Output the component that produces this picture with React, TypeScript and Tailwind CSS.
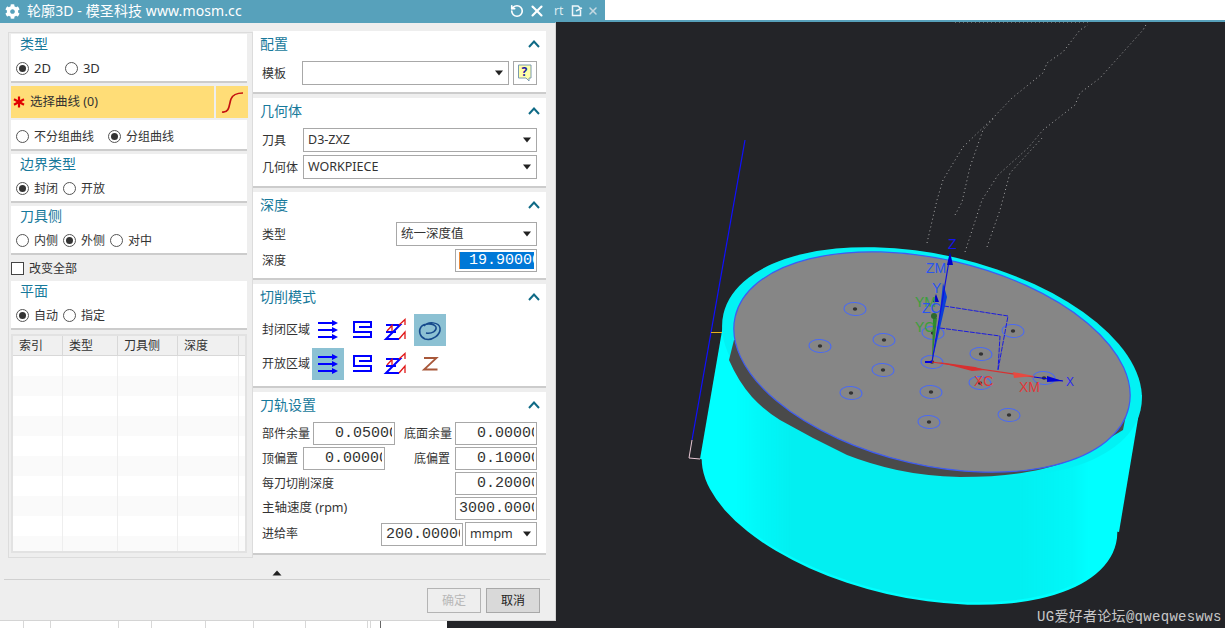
import type { ReactNode } from "react";
import { FaCog } from "react-icons/fa";
import { RotateCcw, X } from "lucide-react";

const uiFont = "font-['Noto_Sans','Noto_Sans_CJK_SC',sans-serif]";

const Radio = ({ on, label, gap = 5, big }: { on?: boolean; label: string; gap?: number; big?: boolean }) => (
  <div className="flex items-center" style={{ marginRight: gap }}>
    <span className="flex h-[13px] w-[13px] items-center justify-center rounded-full border border-[#555] bg-white">
      {on && <span className="h-[7px] w-[7px] rounded-full bg-[#333]" />}
    </span>
    <span className={big ? "ml-[5px] text-[13px] leading-none text-[#333]" : "ml-[5px] text-[12px] leading-none text-[#333]"}>
      {label}
    </span>
  </div>
);

const LeftGroup = ({ title, children }: { title: string; children: ReactNode }) => (
  <div className="h-[49px] w-[236px] border-b-2 border-[#cccccc] bg-white">
    <div className="h-[22px] pl-[9px] text-[14px] leading-[20px] text-[#17799b]">{title}</div>
    <div className="flex h-[25px] items-center pl-[5px]">{children}</div>
  </div>
);

const Caret = () => (
  <svg width="10" height="6" viewBox="0 0 10 6">
    <polygon points="1,0.5 9,0.5 5,5.5" fill="#222" />
  </svg>
);

const Select = ({ value, w, h = 24 }: { value?: string; w: number; h?: number }) => (
  <div
    className="flex shrink-0 items-center justify-between border border-[#a8a8a8] bg-white pl-[4px] pr-[4px] text-[12.5px] text-[#333]"
    style={{ width: w, height: h }}
  >
    <span className="pt-px">{value}</span>
    <Caret />
  </div>
);

const NumInput = ({ value, pad = 21, w = 82 }: { value: string; pad?: number; w?: number }) => (
  <div
    className="h-[23px] shrink-0 overflow-hidden border border-[#a8a8a8] bg-white pr-[2px] font-['Liberation_Mono',monospace] text-[15px] leading-[21px] text-[#333]"
    style={{ width: w }}
  >
    <div className="h-full overflow-hidden whitespace-nowrap" style={{ paddingLeft: pad }}>
      {value}
    </div>
  </div>
);

const Panel = ({ title, h, children }: { title: string; h: number; children: ReactNode }) => (
  <section className="border-b-2 border-[#cccccc] bg-white" style={{ height: h }}>
    <div className="flex h-[26px] items-center justify-between pl-[7px] pr-[6px]">
      <span className="text-[14px] leading-none text-[#17799b]">{title}</span>
      <svg width="12" height="8" viewBox="0 0 12 8">
        <polyline points="1,7 6,1.5 11,7" fill="none" stroke="#0f6a86" strokeWidth="2" />
      </svg>
    </div>
    <div className="pl-[9px] pr-[9px] pt-[4px] text-[12px] text-[#333]">{children}</div>
  </section>
);

const ArrowsIcon = () => (
  <svg width="32" height="32" viewBox="0 0 32 32">
    {[9, 16, 23].map((y) => (
      <g key={y}>
        <line x1="6" y1={y} x2="22" y2={y} stroke="#0000ff" strokeWidth="2" />
        <polygon points={`20,${y - 3} 26,${y} 20,${y + 3}`} fill="#0000ff" />
      </g>
    ))}
  </svg>
);

const ZigIcon = () => (
  <svg width="32" height="32" viewBox="0 0 32 32">
    <path d="M13 13 H25 V8 H8 V18 H25 V23 H7" fill="none" stroke="#0000ff" strokeWidth="2" />
  </svg>
);

const ZagIcon = () => (
  <svg width="32" height="32" viewBox="0 0 32 32">
    <path d="M6 11 H20 L6 25 H19 M6 18 H16" fill="none" stroke="#0000ff" strokeWidth="2" />
    <path d="M19 11 L25 5.500 V11 M19 25 L25 18 V25 M7 17 L12 11.500 V17" fill="none" stroke="#e01818" strokeWidth="1.300" />
  </svg>
);

const SpiralIcon = () => (
  <svg width="32" height="32" viewBox="0 0 32 32">
    <path
      d="M10 12 C14 7 25 8 26 14 C27 21 18 27 11 25 C6 23 4 17 7 13 C10 9 20 9 22 13 C23 17 18 20 12 19"
      fill="none"
      stroke="#164a8c"
      strokeWidth="1.500"
    />
  </svg>
);

const ZIcon = () => (
  <svg width="32" height="32" viewBox="0 0 32 32">
    <path d="M10 10 H22.500 L10 21.500 H23.500" fill="none" stroke="#a8583a" strokeWidth="1.800" />
  </svg>
);

const ModeButton = ({ active, children }: { active?: boolean; children: ReactNode }) => (
  <div className={active ? "h-8 w-8 bg-[#8cc1d3]" : "h-8 w-8"}>{children}</div>
);

const holes = [
  [855, 309], [820, 346], [884, 340], [883, 370], [851, 393], [931, 392], [929, 422], [932, 362],
  [933, 333], [1013, 331], [981, 354], [980, 383], [1044, 378], [1009, 415],
];

const dotted = [
  "M927 243 L937 200 L943 180 L963 147 L993 118 L1012 98 L1043 73 L1047 63 L1063 52 L1080 30 L1088 25",
  "M955 215 L962 202 L970 167 L983 130 L995 117",
  "M965 252 L982 200 L998 175 L1028 148 L1043 130 L1075 105 L1080 93 L1100 78 L1143 30 L1147 23",
  "M987 247 L1000 210 L1010 173 L1043 137",
  "M955 22 L1088 22",
];

const Viewport = () => (
  <svg width="669" height="606" viewBox="556 22 669 606" className="block">
    <defs>
      <pattern id="hatch" width="3" height="2" patternUnits="userSpaceOnUse" patternTransform="rotate(18)">
        <line x1="0" y1="1" x2="3" y2="1" stroke="#0a8f9c" strokeWidth="0.700" opacity="0.4" />
      </pattern>
      <linearGradient id="fade" gradientUnits="userSpaceOnUse" x1="735" y1="0" x2="1090" y2="0">
        <stop offset="0" stopColor="#000" />
        <stop offset="0.06" stopColor="#666" />
        <stop offset="0.16" stopColor="#fff" />
        <stop offset="0.8" stopColor="#fff" />
        <stop offset="0.95" stopColor="#777" />
        <stop offset="1" stopColor="#000" />
      </linearGradient>
      <mask id="fadeMask" maskUnits="userSpaceOnUse" x="690" y="300" width="470" height="320">
        <rect x="690" y="300" width="470" height="320" fill="url(#fade)" />
      </mask>
      <clipPath id="bodyClip">
        <ellipse cx="909.500" cy="494" rx="210" ry="100" transform="rotate(13 909.500 494)" />
        <polygon points="723,325 1142,395 1119,532 700,459" />
      </clipPath>
    </defs>

    {dotted.map((d) => (
      <path key={d} d={d} fill="none" stroke="#a8a8a8" strokeWidth="1" strokeDasharray="1 3" />
    ))}

    {/* stock body */}
    <ellipse cx="909.500" cy="495.500" rx="212" ry="101" transform="rotate(13 909.500 495.500)" fill="#00ffff" />
    <polygon points="723,325 1142,395 1119,532 700,459" fill="#00ffff" />
    <g mask="url(#fadeMask)">
      <rect x="690" y="300" width="470" height="320" fill="url(#hatch)" clipPath="url(#bodyClip)" />
    </g>
    <ellipse cx="932" cy="362" rx="214" ry="107" transform="rotate(13 932 362)" fill="#00ffff" />
    <ellipse cx="932" cy="362" rx="214" ry="107" transform="rotate(13 932 362)" fill="url(#hatch)" opacity="0.8" />

    <path
      d="M734 340 L729 360 Q738 381 752 397 Q764 410 780 420 L813 438 L847 455 Q870 464 897 470 Q925 476 960 477 Q1000 477 1027 472 Q1045 469 1060 464 Q1078 458 1093 448 L1123 430 L1128 405 L932 362 Z"
      fill="#4a4a4a"
    />
    <ellipse cx="932" cy="362" rx="202" ry="103" transform="rotate(13 932 362)" fill="#868686" stroke="#3f5cf0" strokeWidth="1.200" />

    {holes.map(([x, y]) => (
      <g key={`${x}-${y}`}>
        <ellipse cx={x} cy={y} rx="11" ry="6.500" transform={`rotate(4 ${x} ${y})`} fill="none" stroke="#4a6af2" strokeWidth="1" />
        <ellipse cx={x} cy={y} rx="2.200" ry="1.700" fill="#333" />
      </g>
    ))}

    {/* side lines */}
    <line x1="745" y1="140" x2="692" y2="440" stroke="#1010ff" strokeWidth="1.200" />
    <path d="M692 440 L689 458 L700 459" fill="none" stroke="#e8c8d4" strokeWidth="1" />
    <line x1="711" y1="332.500" x2="722" y2="332.500" stroke="#e8b020" strokeWidth="1" />

    {/* wcs */}
    <path d="M944 306 L1008 316 L998 370 M940 328 L1000 336 L998 370" fill="none" stroke="#1a1ae0" strokeWidth="1" strokeDasharray="5 1" />
    <polygon points="932,362 933,318 937,318" fill="#2e8a2e" />
    <ellipse cx="934" cy="316" rx="3" ry="3" fill="#2e6a2e" />
    <polygon points="932,362 939,320 943,283 947,297 940,328" fill="#0a3fd8" />
    <line x1="932" y1="362" x2="950" y2="255" stroke="#1010e0" strokeWidth="1.200" />
    <polygon points="950,252 947,265 953,265" fill="#0000c8" />
    <polygon points="936,294 933,302 939,302" fill="#0000c8" />
    <line x1="925" y1="362" x2="932" y2="362" stroke="#0000e0" strokeWidth="2" />
    <line x1="932" y1="362" x2="1034" y2="377" stroke="#d83030" strokeWidth="1.200" />
    <polygon points="938,362 975,367 985,370 972,371" fill="#d83030" />
    <polygon points="1013,372 1034,376 1014,378" fill="#e84a40" />
    <line x1="1034" y1="377" x2="1063" y2="381" stroke="#0000e0" strokeWidth="1" />
    <polygon points="1047,376 1063,381 1047,382" fill="#0000d8" />

    <g className="font-['Liberation_Sans',sans-serif] text-[14px]">
      <text x="948" y="249" fill="#1414f0">Z</text>
      <text x="926" y="273" fill="#2a55f0">ZM</text>
      <text x="932" y="293" fill="#2a55f0">Y</text>
      <text x="915" y="307" fill="#3aa03a">YM</text>
      <text x="922" y="313" fill="#2a55f0">ZC</text>
      <text x="915" y="332" fill="#3aa03a">YC</text>
      <text x="974" y="386" fill="#e03838">XC</text>
      <text x="1019" y="392" fill="#e03838">XM</text>
      <text x="1066" y="386" fill="#2a2af0" className="text-[12px]">X</text>
    </g>
    <text
      x="1037"
      y="621"
      fill="#c8c8c8"
      className="font-['Liberation_Mono','Noto_Sans_CJK_SC',monospace] text-[14px] tracking-[0.3px]"
    >
      UG爱好者论坛@qweqweswws
    </text>
  </svg>
);

const tableCols = [50, 55, 60, 61, 10];

export default function App() {
  return (
    <div className={`h-[628px] w-[1225px] overflow-hidden bg-[#232428] ${uiFont}`}>
      <header className="flex h-[22px] items-start justify-between bg-[#57a1bb]">
        <div className="flex h-[22px] w-[605px] items-center text-white">
          <FaCog className="ml-[5px] text-[15px]" />
          <span className="ml-[7px] text-[14px] leading-none tracking-[0.1px]">轮廓3D - 模圣科技 www.mosm.cc</span>
          <RotateCcw size={14} strokeWidth={2.8} className="ml-auto" />
          <X size={18} strokeWidth={2.8} className="ml-[4px]" />
          <span className="ml-[8px] w-[10px] overflow-hidden text-[12px] text-[#dcecf2]">rt</span>
          <svg width="12" height="12" viewBox="0 0 12 12" className="ml-[7px]">
            <path d="M1.500 1 H7 L9.500 3.500 V10.500 H1.500 Z M5 6 L11 3" fill="none" stroke="#eef6f9" strokeWidth="1.500" />
          </svg>
          <X size={12} strokeWidth={3} className="ml-[4px] mr-[6px] text-[#c4d9e2]" />
        </div>
        <div className="h-[20px] w-[620px] bg-white" />
      </header>

      <div className="flex">
        <div className="w-[556px] shrink-0">
          <div className="flex h-[599px] flex-col border-r border-b border-[#d4d4d4] border-t-[#57a1bb] border-t bg-[#eeeeee]">
            <div className="flex pl-2 pt-2">
              {/* left column */}
              <div className="mt-px h-[526px] w-[245px] border border-[#dcdcdc] pl-[2px] pt-px">
                <LeftGroup title="类型">
                  <Radio on big label="2D" gap={14} />
                  <Radio big label="3D" />
                </LeftGroup>
                <div className="mt-[3px] flex h-[32px] w-[237px] gap-[2px]">
                  <div className="flex w-[203px] items-center bg-[#ffdd77] text-[12.5px] text-[#333]">
                    <svg width="12" height="12" viewBox="0 0 12 12" className="ml-[2px]">
                      <g stroke="#e00000" strokeWidth="2.200">
                        <line x1="6" y1="0.500" x2="6" y2="11.500" />
                        <line x1="1" y1="3.200" x2="11" y2="8.800" />
                        <line x1="11" y1="3.200" x2="1" y2="8.800" />
                      </g>
                    </svg>
                    <span className="ml-[5px]">选择曲线 (0)</span>
                  </div>
                  <div className="flex w-[32px] items-center justify-center bg-[#ffdd77]">
                    <svg width="24" height="24" viewBox="0 0 24 24">
                      <path d="M2 22 C10 23 9 14 11 9 C13 4 17 3 23 3" fill="none" stroke="#c41010" strokeWidth="1.700" />
                    </svg>
                  </div>
                </div>
                <div className="mt-[2px] flex h-[31px] w-[236px] items-center border-b-2 border-[#cccccc] bg-white pl-[5px] pt-[4px]">
                  <Radio label="不分组曲线" gap={14} />
                  <Radio on label="分组曲线" />
                </div>
                <div className="mt-[3px]">
                  <LeftGroup title="边界类型">
                    <Radio on label="封闭" />
                    <Radio label="开放" />
                  </LeftGroup>
                </div>
                <div className="mt-[3px]">
                  <LeftGroup title="刀具侧">
                    <Radio label="内侧" />
                    <Radio on label="外侧" />
                    <Radio label="对中" />
                  </LeftGroup>
                </div>
                <div className="flex h-[26px] items-center pt-px text-[12px] text-[#333]">
                  <span className="h-[13px] w-[13px] border border-[#444] bg-white" />
                  <span className="ml-[5px]">改变全部</span>
                </div>
                <LeftGroup title="平面">
                  <Radio on label="自动" />
                  <Radio label="指定" />
                </LeftGroup>
                <div className="mt-[4px] h-[219px] w-[236px] overflow-hidden border-2 border-[#e2e2e2] bg-white">
                  <div className="flex h-[20px] border-b border-[#d8d8d8] bg-[#f0f0f0] text-[12px] leading-[20px] text-[#333]">
                    {["索引", "类型", "刀具侧", "深度", ""].map((t, i) => (
                      <div
                        key={i}
                        className="shrink-0 border-r border-[#d8d8d8] pl-[6px]"
                        style={{ width: tableCols[i] }}
                      >
                        {t}
                      </div>
                    ))}
                  </div>
                  {Array.from({ length: 10 }, (_, r) => (
                    <div key={r} className={r % 2 ? "flex h-[20px] bg-[#fafafa]" : "flex h-[20px] bg-white"}>
                      {tableCols.map((w, i) => (
                        <div key={i} className="shrink-0 border-r border-[#eeeeee]" style={{ width: w }} />
                      ))}
                    </div>
                  ))}
                </div>
              </div>

              {/* right column */}
              <div className="flex w-[293px] flex-col gap-1">
                <Panel title="配置" h={63}>
                  <div className="flex items-center">
                    <span className="w-[40px] pt-px">模板</span>
                    <Select w={207} />
                    <div className="ml-[4px] flex h-[24px] w-[24px] items-center justify-center border border-[#a8a8a8]">
                      <svg width="16" height="18" viewBox="0 0 16 18">
                        <path d="M1.500 1 H14 V14 H12 V17 L9 14 H1.500 Z" fill="#ffffa8" stroke="#7a9ab0" strokeWidth="1" />
                        <text x="4.500" y="11.500" fill="#1a1aa0" className="text-[12px] font-bold">?</text>
                      </svg>
                    </div>
                  </div>
                </Panel>
                <Panel title="几何体" h={90}>
                  <div className="flex items-center">
                    <span className="w-[41px] pt-px">刀具</span>
                    <Select w={234} value="D3-ZXZ" />
                  </div>
                  <div className="mt-[3px] flex items-center">
                    <span className="w-[41px] pt-px">几何体</span>
                    <Select w={234} value="WORKPIECE" />
                  </div>
                </Panel>
                <Panel title="深度" h={88}>
                  <div className="flex items-center justify-between">
                    <span className="pt-px">类型</span>
                    <Select w={141} value="统一深度值" />
                  </div>
                  <div className="mt-[3px] flex items-center justify-between">
                    <span>深度</span>
                    <div className="h-[23px] w-[82px] border border-[#a8a8a8] bg-white p-[2px] pl-[3px]">
                      <div className="h-[17px] overflow-hidden whitespace-nowrap border-l border-l-[#e88a3a] bg-[#0078d7] pl-[9px] font-['Liberation_Mono',monospace] text-[15px] leading-[17px] text-white">
                        19.90000
                      </div>
                    </div>
                  </div>
                </Panel>
                <Panel title="切削模式" h={104}>
                  <div className="flex items-center">
                    <span className="w-[50px]">封闭区域</span>
                    <div className="flex gap-[2px]">
                      <ModeButton><ArrowsIcon /></ModeButton>
                      <ModeButton><ZigIcon /></ModeButton>
                      <ModeButton><ZagIcon /></ModeButton>
                      <ModeButton active><SpiralIcon /></ModeButton>
                    </div>
                  </div>
                  <div className="mt-[2px] flex items-center">
                    <span className="w-[50px]">开放区域</span>
                    <div className="flex gap-[2px]">
                      <ModeButton active><ArrowsIcon /></ModeButton>
                      <ModeButton><ZigIcon /></ModeButton>
                      <ModeButton><ZagIcon /></ModeButton>
                      <ModeButton><ZIcon /></ModeButton>
                    </div>
                  </div>
                </Panel>
                <Panel title="刀轨设置" h={163}>
                  <div className="flex flex-col gap-[2px]">
                    <div className="flex items-center justify-between">
                      <div className="flex items-center">
                        <span className="w-[51px]">部件余量</span>
                        <NumInput value="0.05000" />
                      </div>
                      <div className="flex items-center">
                        <span className="w-[51px]">底面余量</span>
                        <NumInput value="0.00000" />
                      </div>
                    </div>
                    <div className="flex items-center justify-between">
                      <div className="flex items-center">
                        <span className="w-[41px]">顶偏置</span>
                        <NumInput value="0.00000" />
                      </div>
                      <div className="flex items-center">
                        <span className="w-[41px]">底偏置</span>
                        <NumInput value="0.10000" />
                      </div>
                    </div>
                    <div className="flex items-center justify-between">
                      <span>每刀切削深度</span>
                      <NumInput value="0.20000" />
                    </div>
                    <div className="flex items-center justify-between">
                      <span className="text-[12.5px]">主轴速度 (rpm)</span>
                      <NumInput value="3000.0000" pad={3} />
                    </div>
                    <div className="flex items-center">
                      <span className="mr-auto">进给率</span>
                      <NumInput value="200.00000" pad={4} />
                      <div className="ml-[2px]">
                        <Select w={72} value="mmpm" />
                      </div>
                    </div>
                  </div>
                </Panel>
              </div>
            </div>

            <div className="flex h-[21px] items-end pb-[3px] pl-[272px]">
              <svg width="10" height="6" viewBox="0 0 10 6">
                <polygon points="5,0.500 9.500,5.500 0.500,5.500" fill="#222" />
              </svg>
            </div>
            <div className="ml-1 mr-[5px] h-px bg-[#d0d0d0]" />
            <div className="flex justify-end gap-[5px] pr-[15px] pt-[8px] text-[12px]">
              <button type="button" className="h-[25px] w-[54px] border border-[#b4b4b4] text-[#b8b8b8]">确定</button>
              <button type="button" className="h-[25px] w-[54px] border border-[#a8a8a8] bg-[#d9d9d9] text-[#222]">取消</button>
            </div>
          </div>

          {/* sheet behind the dialog */}
          <div className="flex h-[7px] w-[447px] bg-white">
            {[24, 27, 68, 33, 54, 48, 52, 62, 3, 10].map((w, i) => (
              <div key={i} className={i === 9 ? "border-r-[#666] border-r" : "border-r border-[#d8d8d8]"} style={{ width: w }} />
            ))}
          </div>
        </div>
        <Viewport />
      </div>
    </div>
  );
}
